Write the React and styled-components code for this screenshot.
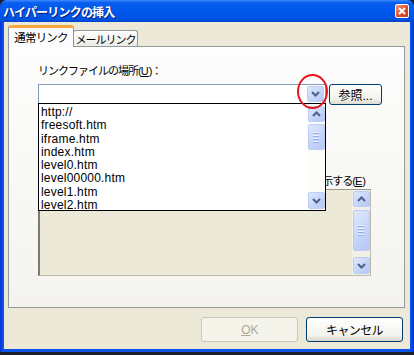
import React from 'react';
import styled, { createGlobalStyle } from 'styled-components';

const GlobalStyle = createGlobalStyle`
  html, body {
    margin: 0;
    padding: 0;
    background: #1d1f2a;
  }
  body {
    width: 414px;
    height: 355px;
    overflow: hidden;
    font-family: "Liberation Sans", "Noto Sans CJK JP", sans-serif;
  }
`;

const Window = styled.div`
  width: 414px;
  height: 352px;
  box-sizing: border-box;
  background: linear-gradient(90deg, #0831d9 0px, #0a55e6 3px, #0a55e6 410px, #0831d9 414px);
  border-radius: 7px 7px 0 0;
  display: flex;
  flex-direction: column;
`;

const TitleBar = styled.div`
  height: 22px;
  flex-shrink: 0;
  display: flex;
  align-items: center;
  justify-content: space-between;
  padding: 0 5px 0 3px;
  border-radius: 7px 7px 0 0;
  background: linear-gradient(#3d8bff 0%, #0a5fef 12%, #0058ee 45%, #0054e3 85%, #0045cf 100%);
`;

const Title = styled.span`
  color: #fff;
  font-weight: bold;
  font-size: 12px;
  letter-spacing: -0.8px;
  text-shadow: 1px 1px #0a1883;
`;

const CloseButton = styled.div`
  width: 14px;
  height: 14px;
  box-sizing: border-box;
  border: 1px solid #fff;
  border-radius: 2px;
  background: linear-gradient(135deg, #f09a7c, #e1522e 50%, #c43a1a);
  display: flex;
  align-items: center;
  justify-content: center;
`;

const Client = styled.div`
  flex: 1;
  margin: 0 4px 3px 4px;
  background: #ece9d8;
  padding: 4px 5px 0 4px;
  display: flex;
  flex-direction: column;
`;

const TabRow = styled.div`
  display: flex;
  align-items: flex-end;
  height: 21px;
  margin-bottom: -1px;
  position: relative;
  z-index: 1;
`;

const Tab = styled.div`
  box-sizing: border-box;
  width: ${p => (p.active ? '66px' : '65px')};
  height: ${p => (p.active ? '22px' : '16px')};
  margin-bottom: ${p => (p.active ? '0' : '1px')};
  margin-left: ${p => (p.active ? '0' : '-1px')};
  border: 1px solid #919b9c;
  border-bottom: none;
  border-top: ${p => (p.active ? '3px solid #f7a93b' : '1px solid #919b9c')};
  border-radius: 3px 3px 0 0;
  background: ${p => (p.active ? '#fcfcfe' : 'linear-gradient(#fefefe, #ecebe6)')};
  font-size: ${p => (p.active ? '11.5px' : '11px')};
  letter-spacing: ${p => (p.active ? '-0.8px' : '-1px')};
  white-space: nowrap;
  color: #000;
  display: flex;
  align-items: center;
  justify-content: center;
  padding-bottom: ${p => (p.active ? '1px' : '0')};
`;

const Panel = styled.div`
  box-sizing: border-box;
  height: 262px;
  border: 1px solid #919b9c;
  background: linear-gradient(#fdfdfd, #f4f3ee);
  padding: 0 0 0 29px;
  display: flex;
  flex-direction: column;
  align-items: flex-start;
`;

const FieldLabel = styled.div`
  margin-top: ${p => p.top}px;
  font-size: 11px;
  line-height: 14px;
  letter-spacing: -1px;
  color: #000;
  width: ${p => (p.width ? `${p.width}px` : 'auto')};
  text-align: ${p => p.align || 'left'};
  box-sizing: border-box;
  padding-right: ${p => p.pr || 0}px;
  white-space: nowrap;
  overflow: hidden;
`;

const Key = styled.span`
  text-decoration: underline;
  letter-spacing: 0;
`;

const ComboRow = styled.div`
  margin-top: 6px;
  display: flex;
  gap: 3px;
  align-items: flex-start;
`;

const Combo = styled.div`
  position: relative;
  width: 288px;
  height: 20px;
  box-sizing: border-box;
  border: 1px solid #7f9db9;
  background: #fff;
  display: flex;
  justify-content: flex-end;
  align-items: center;
  padding-right: 1px;
`;

const ScrollBtn = styled.div`
  box-sizing: border-box;
  width: ${p => p.w || 17}px;
  height: ${p => p.h || 16}px;
  border: 1px solid #bccdf3;
  border-radius: 2px;
  background: linear-gradient(135deg, #dfe8fd, #c3d3f8 60%, #b5c8f5);
  display: flex;
  align-items: center;
  justify-content: center;
  flex-shrink: 0;
`;

const Thumb = styled(ScrollBtn)`
  flex-direction: column;
  gap: 1px;
`;

const Grip = styled.div`
  width: 6px;
  height: 1px;
  background: #eef3ff;
  border-bottom: 1px solid #8fb0f0;
`;

const RedCircle = styled.div`
  position: absolute;
  left: 258px;
  top: -11px;
  width: 31px;
  height: 35px;
  box-sizing: border-box;
  border: 2px solid #e8141b;
  border-radius: 50%;
  z-index: 3;
`;

const DropList = styled.div`
  position: absolute;
  left: -1px;
  top: 18px;
  width: 288px;
  height: 108px;
  box-sizing: border-box;
  border: 1px solid #000;
  background: #fff;
  display: flex;
  z-index: 2;
`;

const Items = styled.div`
  flex: 1;
  padding: 2px 0 0 2px;
`;

const Item = styled.div`
  font-size: 12px;
  letter-spacing: 0.2px;
  line-height: 13.3px;
  color: #000;
`;

const ScrollCol = styled.div`
  width: 18px;
  display: flex;
  flex-direction: column;
  align-items: center;
  padding: ${p => p.pad || '2px 0 1px'};
  box-sizing: border-box;
  background: ${p => p.track || '#fcfcf9'};
`;

const Spacer = styled.div`
  flex: ${p => (p.grow ? 1 : 'none')};
  height: ${p => p.h || 0}px;
`;

const BrowseButton = styled.div`
  width: 53px;
  height: 21px;
  box-sizing: border-box;
  border: 1px solid #003c74;
  border-radius: 3px;
  background: linear-gradient(#ffffff, #f4f3ee 70%, #dedcd1);
  font-size: 12px;
  display: flex;
  align-items: center;
  justify-content: center;
  color: #000;
`;

const DisabledBox = styled.div`
  margin-top: 1px;
  width: 333px;
  height: 87px;
  box-sizing: border-box;
  border: 1px solid #bcbab0;
  border-left: 2px solid #7d7b70;
  border-top: 1px solid #9c9a90;
  background: #ece9d8;
  display: flex;
  justify-content: flex-end;
`;

const ButtonRow = styled.div`
  margin-top: 9px;
  display: flex;
  justify-content: flex-end;
  gap: 8px;
  padding-right: 2px;
`;

const DialogButton = styled.div`
  width: ${p => p.w}px;
  height: 25px;
  box-sizing: border-box;
  border: 1px solid ${p => (p.disabled ? '#c9c7ba' : '#003c74')};
  border-radius: 3px;
  background: ${p => (p.disabled ? '#f5f4ea' : 'linear-gradient(#ffffff, #f4f3ee 75%, #d9d7cb)')};
  color: ${p => (p.disabled ? '#aca899' : '#000')};
  font-size: 12px;
  letter-spacing: -0.6px;
  display: flex;
  align-items: center;
  justify-content: center;
`;

const Chevron = ({ up }) => (
  <svg width="9" height="6" viewBox="0 0 9 6">
    <path
      d={up ? 'M1 5 L4.5 1.5 L8 5' : 'M1 1 L4.5 4.5 L8 1'}
      fill="none"
      stroke="#4d6185"
      strokeWidth="2"
    />
  </svg>
);

const ScrollThumb = ({ h }) => (
  <Thumb h={h}>
    <Grip />
    <Grip />
    <Grip />
    <Grip />
  </Thumb>
);

const files = [
  'http://',
  'freesoft.htm',
  'iframe.htm',
  'index.htm',
  'level0.htm',
  'level00000.htm',
  'level1.htm',
  'level2.htm',
];

export default function App() {
  return (
    <>
      <GlobalStyle />
      <Window>
        <TitleBar>
          <Title>ハイパーリンクの挿入</Title>
          <CloseButton>
            <svg width="8" height="8" viewBox="0 0 8 8">
              <path d="M1 1 L7 7 M7 1 L1 7" stroke="#fff" strokeWidth="2" />
            </svg>
          </CloseButton>
        </TitleBar>
        <Client>
          <TabRow>
            <Tab active>通常リンク</Tab>
            <Tab>メールリンク</Tab>
          </TabRow>
          <Panel>
            <FieldLabel top={17}>
              リンクファイルの場所(<Key>U</Key>)：
            </FieldLabel>
            <ComboRow>
              <Combo>
                <ScrollBtn w={17} h={16}>
                  <Chevron />
                </ScrollBtn>
                <RedCircle />
                <DropList>
                  <Items>
                    {files.map(f => (
                      <Item key={f}>{f}</Item>
                    ))}
                  </Items>
                  <ScrollCol>
                    <ScrollBtn>
                      <Chevron up />
                    </ScrollBtn>
                    <Spacer h={2} />
                    <ScrollThumb h={26} />
                    <Spacer grow />
                    <ScrollBtn h={17}>
                      <Chevron />
                    </ScrollBtn>
                  </ScrollCol>
                </DropList>
              </Combo>
              <BrowseButton>参照...</BrowseButton>
            </ComboRow>
            <FieldLabel top={69} width={333} align="right" pr={6}>
              新しいウィンドウで表示する(<Key>E</Key>)
            </FieldLabel>
            <DisabledBox>
              <ScrollCol pad="1px 0 1px" track="#f3f1e7">
                <ScrollBtn>
                  <Chevron up />
                </ScrollBtn>
                <Spacer h={3} />
                <ScrollThumb h={41} />
                <Spacer grow />
                <ScrollBtn h={17}>
                  <Chevron />
                </ScrollBtn>
              </ScrollCol>
            </DisabledBox>
          </Panel>
          <ButtonRow>
            <DialogButton w={97} disabled>
              <Key>O</Key>K
            </DialogButton>
            <DialogButton w={97}>キャンセル</DialogButton>
          </ButtonRow>
        </Client>
      </Window>
    </>
  );
}
